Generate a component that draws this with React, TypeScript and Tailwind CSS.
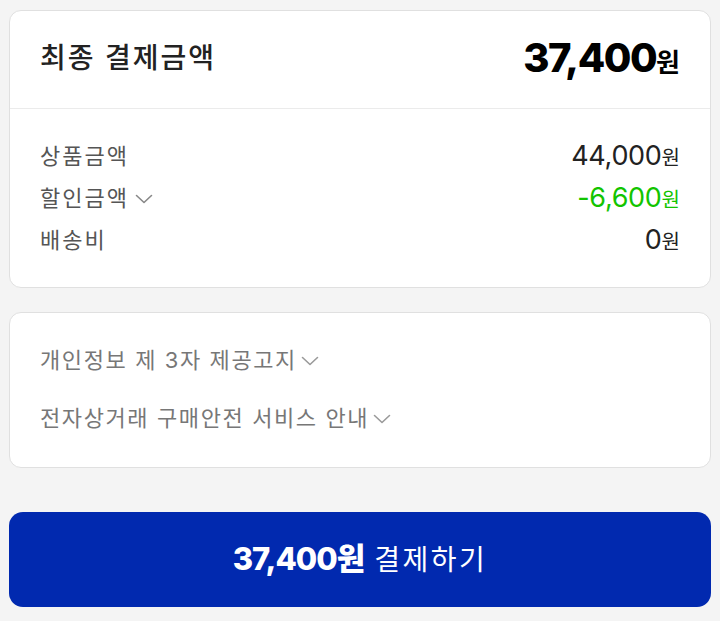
const font = { fontFamily: 'Inter, "Noto Sans CJK KR", sans-serif' };

function Chevron({ className }: { className?: string }) {
  return (
    <svg width="18" height="10" viewBox="0 0 18 10" fill="none" className={className}>
      <path d="M1.5 1.5L9 8.5L16.5 1.5" stroke="currentColor" strokeWidth="1.6" strokeLinecap="round" strokeLinejoin="round" />
    </svg>
  );
}

interface LineProps {
  label: string;
  value: string;
  toggle?: boolean;
  green?: boolean;
}

function Line({ label, value, toggle, green }: LineProps) {
  return (
    <div className="flex h-[42px] items-center justify-between">
      <div className="flex items-center gap-1.5 text-[22px] tracking-[2px] text-[#555]">
        <span>{label}</span>
        {toggle && <Chevron className="mt-0.5 text-[#888]" />}
      </div>
      <div className={`flex items-baseline ${green ? 'text-[#12c400]' : 'text-[#222]'}`}>
        <span className="text-[27px] tracking-[-0.3px]">{value}</span>
        <span className="text-[20px]">원</span>
      </div>
    </div>
  );
}

function Notice({ label }: { label: string }) {
  return (
    <div className="flex h-[58px] items-center gap-1 text-[22px] tracking-[1.6px] text-[#777]">
      <span>{label}</span>
      <Chevron className="mt-0.5 text-[#9a9a9a]" />
    </div>
  );
}

export default function App() {
  return (
    <div className="flex min-h-[621px] flex-col bg-[#f4f4f4] px-[9px] pt-[10px] pb-[14px]" style={font}>
      <div className="rounded-[12px] border border-[#e0e0e0] bg-white">
        <div className="flex h-[98px] items-center justify-between border-b border-[#ebebeb] px-[30px] pb-1">
          <span className="text-[28px] font-medium tracking-[2px] text-[#222]">최종 결제금액</span>
          <div className="flex items-baseline text-black">
            <span className="text-[40px] font-extrabold tracking-[-1.5px]">37,400</span>
            <span className="text-[26px] font-bold">원</span>
          </div>
        </div>
        <div className="px-[30px] pt-[26px] pb-[26px]">
          <Line label="상품금액" value="44,000" />
          <Line label="할인금액" value="-6,600" toggle green />
          <Line label="배송비" value="0" />
        </div>
      </div>

      <div className="mt-[24px] rounded-[12px] border border-[#e0e0e0] bg-white px-[30px] pt-[18px] pb-[20px]">
        <Notice label="개인정보 제 3자 제공고지" />
        <Notice label="전자상거래 구매안전 서비스 안내" />
      </div>

      <button className="mt-[44px] flex h-[95px] items-center justify-center gap-2.5 rounded-[14px] bg-[#0129af] text-white">
        <span className="text-[31px] font-extrabold tracking-[-1px]">37,400원</span>
        <span className="text-[28px] tracking-[2.5px]">결제하기</span>
      </button>
    </div>
  );
}
